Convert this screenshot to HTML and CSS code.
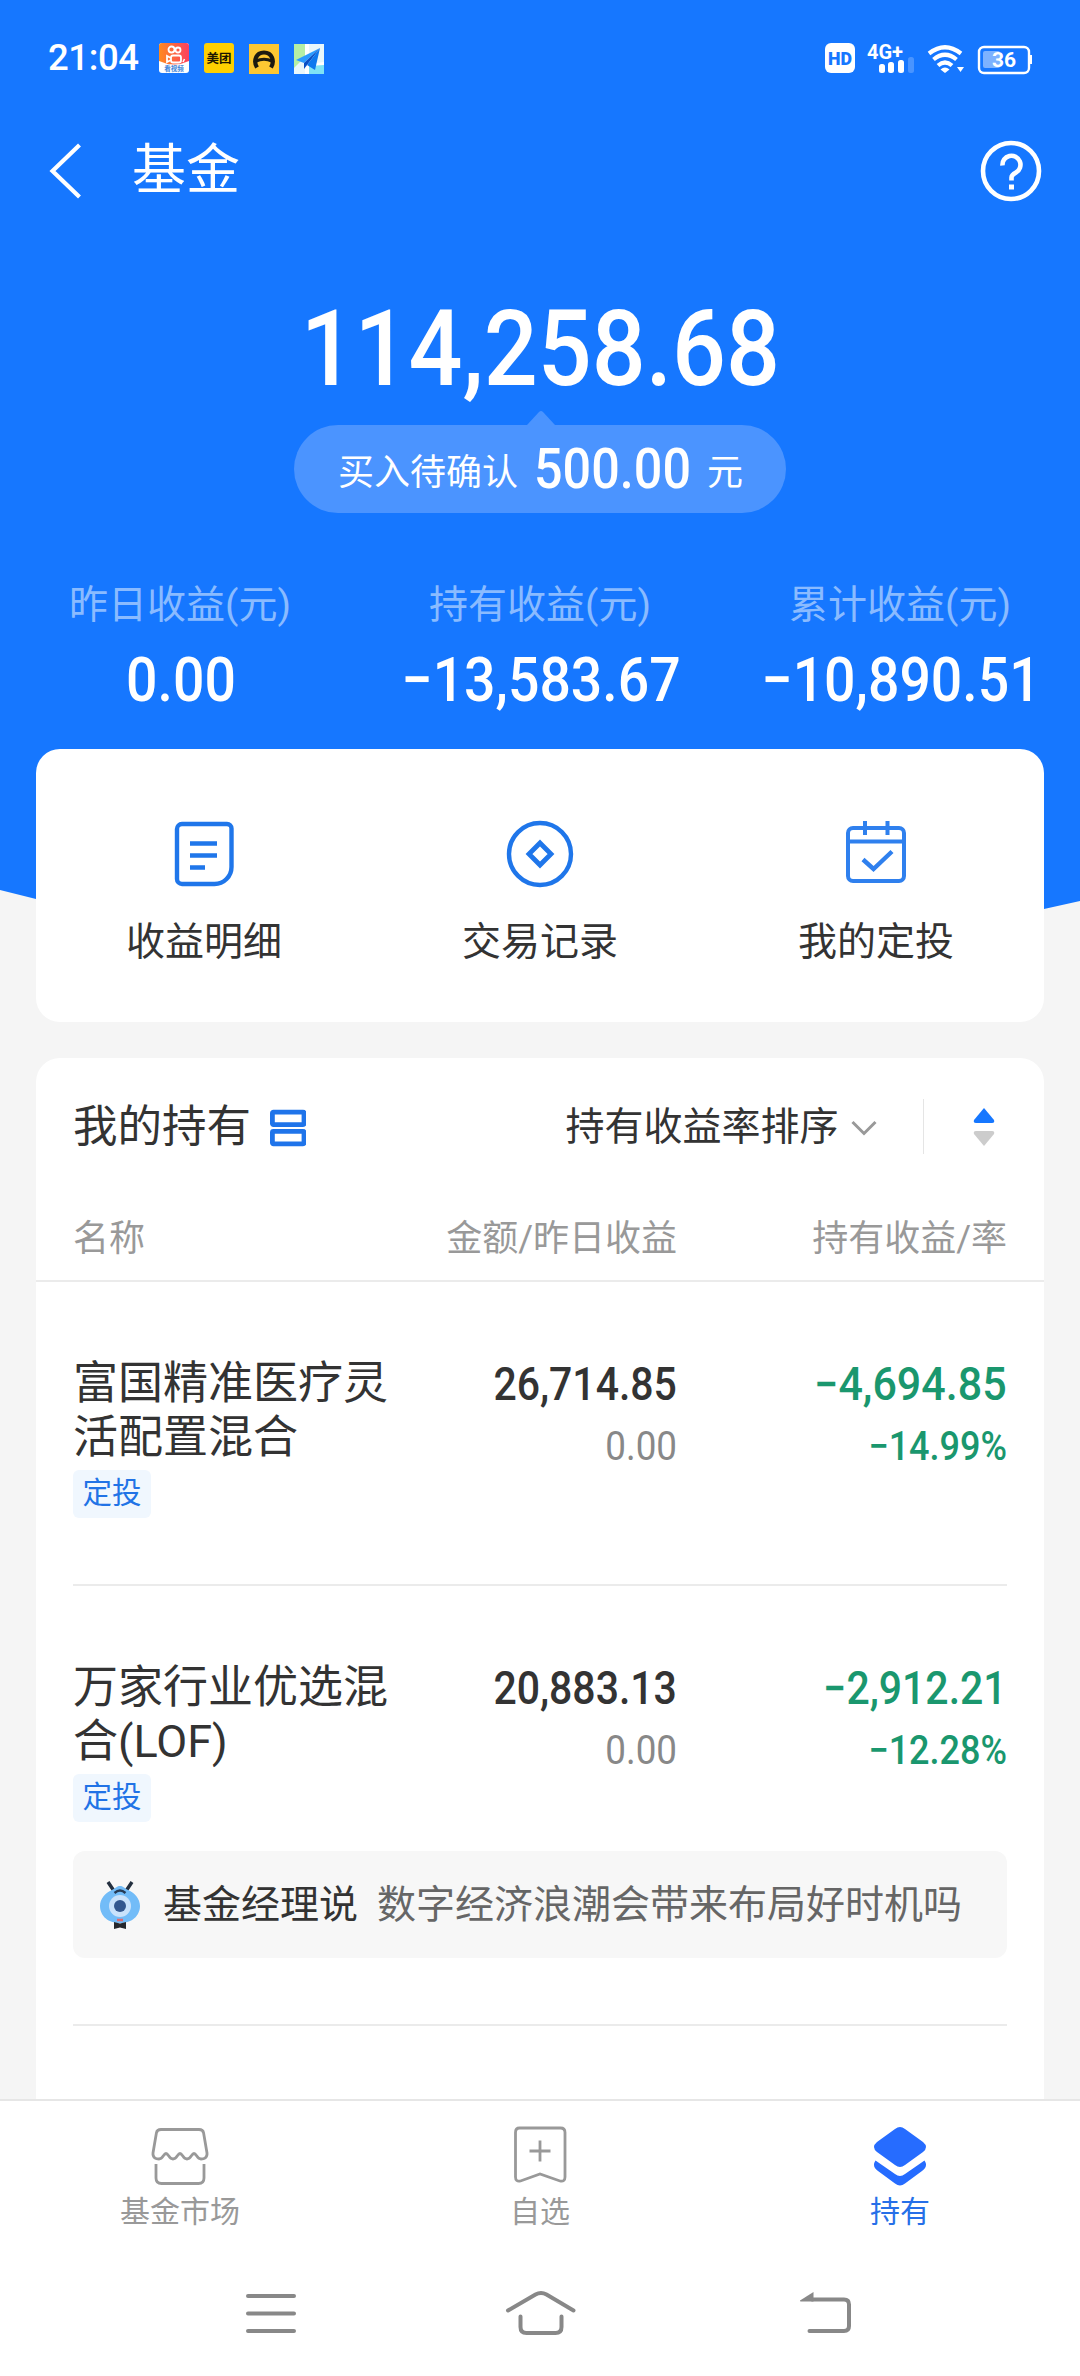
FILE: index.html
```html
<!DOCTYPE html>
<html lang="zh-CN">
<head>
<meta charset="utf-8">
<title>基金</title>
<link rel="stylesheet" href="styles.css">
</head>
<body>
<div class="screen">
  <header class="hero">
    <div class="status">
      <div class="status-left">
        <span class="clock">21:04</span>
        <svg class="app" viewBox="0 0 30 30"><defs><linearGradient id="ks" x1="0" y1="0" x2="1" y2="0"><stop offset="0" stop-color="#ff8a1f"/><stop offset="1" stop-color="#fb4060"/></linearGradient></defs><rect width="30" height="30" rx="3" fill="#fff"/><path d="M0 3a3 3 0 0 1 3-3h24a3 3 0 0 1 3 3v15q-15 7-30 0z" fill="url(#ks)"/><g fill="none" stroke="#fff" stroke-width="1.8"><circle cx="12.500" cy="6.500" r="3"/><circle cx="19" cy="7" r="2.500"/><rect x="12" y="12.500" width="10" height="7" rx="2"/><path d="M12 15l-4-2v6l4-2"/></g><path d="M24 19l1.500-3" stroke="#fff" stroke-width="1.500"/><text x="15" y="27.500" font-size="6.500" font-weight="700" text-anchor="middle" fill="#3d82d8">看视频</text></svg>
        <svg class="app" viewBox="0 0 30 30"><rect width="30" height="30" rx="3" fill="#ffd000"/><text x="15" y="19.500" font-size="12.500" font-weight="700" text-anchor="middle" fill="#1c1600">美团</text></svg>
        <svg class="app low" viewBox="0 0 30 30"><rect width="30" height="30" fill="#fdc732"/><path d="M8 23.500C4 17 7 8.500 15 8.500S26 17 22 23.500" fill="none" stroke="#1d1a10" stroke-width="4.200"/><path d="M7 17q8-3.500 16 0" fill="none" stroke="#1d1a10" stroke-width="3.200"/></svg>
        <svg class="app low" viewBox="0 0 30 30"><rect width="30" height="30" fill="#e9f7fb"/><path d="M0 0h11v13L0 24z" fill="#b5efa5"/><path d="M11 0h4v30h-4z" fill="#fff"/><path d="M15 21h15v9H15z" fill="#7fe3f5"/><path d="M15 20l15-2v3l-15 1z" fill="#fff"/><path d="M26 4L2 16l8 3z" fill="#2a9bff"/><path d="M26 4L10 19v6z" fill="#0a4fc4"/><path d="M26 4L13 21l8 5z" fill="#0d78ee"/></svg>
      </div>
      <div class="status-right">
        <svg width="210" height="34" viewBox="822 41 210 34"><rect x="825" y="43" width="30" height="30" rx="6" fill="#fff"/><text x="840" y="64.500" font-size="18" font-weight="900" text-anchor="middle" textLength="24" lengthAdjust="spacingAndGlyphs" fill="#1677ff">HD</text><text x="867" y="59" font-size="21" font-weight="700" textLength="36" lengthAdjust="spacingAndGlyphs" fill="#fff">4G+</text><g fill="#fff"><rect x="879" y="64" width="6" height="9" rx="2.500"/><rect x="888" y="62" width="6" height="11" rx="2.500"/><rect x="898" y="60" width="6" height="13" rx="2.500"/><rect x="908" y="57" width="6" height="16" rx="2.500" opacity=".22"/><path d="M957 67h7l-3.500 5z"/><path d="M940.500 69.500q4.500-4 9 0l-4.500 3.500z"/></g><g fill="none" stroke="#fff" stroke-width="4.200"><path d="M929 53.500q16-12.500 32 0"/><path d="M933.500 59.500q11.500-9.500 23 0"/><path d="M938 65.500q7-6 14 0"/></g><rect x="979" y="47" width="50" height="26" rx="5" fill="none" stroke="#fff" stroke-width="2.400"/><rect x="983" y="51" width="17" height="17" rx="2" fill="#7db2ff"/><path d="M1031 55v9" stroke="#fff" stroke-width="2"/><text x="1004" y="67" font-size="21" font-weight="700" text-anchor="middle" fill="#fff">36</text></svg>
      </div>
    </div>
    <nav class="titlebar">
      <svg class="back" width="34" height="56" viewBox="0 0 34 56"><path d="M31.500 2L4.500 28l27 26" fill="none" stroke="#fff" stroke-width="4.200"/></svg>
      <h1 class="title">基金</h1>
      <svg class="help" width="62" height="62" viewBox="0 0 62 62"><circle cx="31" cy="31" r="28" fill="none" stroke="#fff" stroke-width="4.600"/><path d="M22.500 25.500a9 9 0 1 1 13.500 7q-4.500 2.500-4.500 5v3" fill="none" stroke="#fff" stroke-width="4.600"/><rect x="29" y="44.500" width="5" height="5" fill="#fff"/></svg>
    </nav>
    <div class="total"><span class="num">114,258.68</span></div>
    <div class="pending">
      <svg class="notch" width="28" height="14" viewBox="0 0 28 14"><path d="M0 14L12 1q2-2 4 0l12 13z" fill="#4b94ff"/></svg>
      <span>买入待确认</span><span class="pending-num"><span class="num">500.00</span></span><span>元</span>
    </div>
    <div class="stats">
      <div class="stat"><div class="stat-label">昨日收益(元)</div><div class="stat-value"><span class="num">0.00</span></div></div>
      <div class="stat"><div class="stat-label">持有收益(元)</div><div class="stat-value"><span class="num">−13,583.67</span></div></div>
      <div class="stat"><div class="stat-label">累计收益(元)</div><div class="stat-value"><span class="num">−10,890.51</span></div></div>
    </div>
  </header>

  <section class="card shortcuts">
    <div class="shortcut">
      <svg width="72" height="72" viewBox="0 0 72 72"><path d="M14 6h45a4.500 4.500 0 0 1 4.500 4.500V49a17 17 0 0 1-17 17H14a5 5 0 0 1-5-5V11a5 5 0 0 1 5-5z" fill="none" stroke="#1f76ea" stroke-width="4.400"/><path d="M22 25.500h27M22 37.500h27M22 49.500h15" stroke="#1f76ea" stroke-width="4.600"/></svg>
      <span>收益明细</span>
    </div>
    <div class="shortcut">
      <svg width="72" height="72" viewBox="0 0 72 72"><circle cx="36" cy="36" r="31" fill="none" stroke="#1f76ea" stroke-width="4.400"/><path d="M36 25L47 36L36 47L25 36z" fill="none" stroke="#1f76ea" stroke-width="4.800"/></svg>
      <span>交易记录</span>
    </div>
    <div class="shortcut">
      <svg width="72" height="72" viewBox="0 0 72 72"><g fill="none" stroke="#2f80ee" stroke-width="4"><rect x="8" y="10" width="56" height="53" rx="5"/><path d="M8 23.500h56M25 3v14M47.500 3v14"/><path d="M23 41.500l10.500 9.500L52 33.500" stroke-width="4.400"/></g></svg>
      <span>我的定投</span>
    </div>
  </section>

  <main class="card holdings">
    <div class="toolbar">
      <h2 class="toolbar-title">我的持有</h2>
      <svg class="layout-icon" width="36" height="38" viewBox="0 0 36 38"><g fill="none" stroke="#1f74ea" stroke-width="4.800"><rect x="2.400" y="3.200" width="31.600" height="12.400" rx="1"/><rect x="2.400" y="22.400" width="31.600" height="12.400" rx="1"/></g></svg>
      <span class="sort">持有收益率排序</span>
      <svg class="chev" width="26" height="18" viewBox="0 0 26 18"><path d="M1.500 3L13 14.500L24.500 3" fill="none" stroke="#999" stroke-width="3"/></svg>
      <span class="divider"></span>
      <svg class="order" width="22" height="38" viewBox="0 0 22 38"><path d="M11 0l10 12q1 3-2 3H3q-3 0-2-3z" fill="#1677ff"/><path d="M11 38l10-12q1-3-2-3H3q-3 0-2 3z" fill="#ccc"/></svg>
    </div>
    <div class="row cols-head"><span>名称</span><span>金额/昨日收益</span><span>持有收益/率</span></div>

    <article class="fund">
      <div class="row">
        <div><h3 class="name">富国精准医疗灵<br>活配置混合</h3><span class="tag">定投</span></div>
        <div class="figures"><div class="big dark"><span class="num">26,714.85</span></div><div class="small grey"><span class="num">0.00</span></div></div>
        <div class="figures green"><div class="big"><span class="num wide">−4,694.85</span></div><div class="small"><span class="num">−14.99%</span></div></div>
      </div>
    </article>

    <article class="fund with-tip">
      <div class="row">
        <div><h3 class="name">万家行业优选混<br>合(LOF)</h3><span class="tag">定投</span></div>
        <div class="figures"><div class="big dark"><span class="num">20,883.13</span></div><div class="small grey"><span class="num">0.00</span></div></div>
        <div class="figures green"><div class="big"><span class="num">−2,912.21</span></div><div class="small"><span class="num">−12.28%</span></div></div>
      </div>
      <div class="tip">
        <svg width="42" height="48" viewBox="0 0 42 48"><path d="M9 1l6 9M33 1l-6 9" stroke="#243040" stroke-width="3.400"/><path d="M21 5c3 0 4 2 8 4 7 3 12 9 12 16s-5 17-20 17S1 32 1 25 6 12 13 9c4-2 5-4 8-4z" fill="#72bcf8"/><path d="M15.500 12q5.500-5 11 0" fill="none" stroke="#263b55" stroke-width="2.400"/><circle cx="21" cy="25" r="11" fill="#c9e2fb"/><circle cx="21" cy="25" r="6" fill="#34588f"/><path d="M18 39h6" stroke="#dc6c74" stroke-width="2.500"/><path d="M15 41l6 1.500 6-1.500v7l-6-1.500-6 1.500z" fill="#25272c"/></svg>
        <b>基金经理说</b><span>数字经济浪潮会带来布局好时机吗</span>
      </div>
    </article>
  </main>

  <nav class="tabs">
    <div class="tab">
      <svg width="64" height="64" viewBox="0 0 64 64"><g fill="none" stroke="#999" stroke-width="2.800"><path d="M13 6.500h38q4 0 4.600 3.500L59 30c.5 5-3 6-6 6-4 0-4.500-5.500-7-5.500S43 36 39 36s-4.500-5.500-7-5.500S29 36 25 36s-4.500-5.500-7-5.500S15 36 11 36c-3 0-6.500-1-6-6L8.400 10Q9 6.500 13 6.500z"/><path d="M8 41v14q0 5.500 5.500 5.500h37q5.500 0 5.500-5.500V41"/></g></svg>
      <span>基金市场</span>
    </div>
    <div class="tab">
      <svg width="64" height="64" viewBox="0 0 64 64"><g fill="none" stroke="#999" stroke-width="2.800"><path d="M11.500 5h41q4.500 0 4.500 4.500V54q0 5-5 4L32 51 12.500 58q-5 1-5-4V9.500Q7.500 5 11.500 5z"/><path d="M32 17.500v21M21.500 28h21"/></g></svg>
      <span>自选</span>
    </div>
    <div class="tab active">
      <svg width="64" height="64" viewBox="0 0 64 64"><g fill="#266cff"><path d="M27 6q5-4 10 0l18 13q6 5 0 10L37 42q-5 4-10 0L9 29q-6-5 0-10z"/><path d="M7.500 37.500L27 51q5 4 10 0l19.500-13.500q4 6-2.500 10.500L37 60.500q-5 4-10 0L10 48q-6.500-4.500-2.500-10.500z"/></g></svg>
      <span>持有</span>
    </div>
  </nav>
  <footer class="sysnav">
    <svg viewBox="0 0 80 60"><path d="M18 13h46M18 30.500h46M18 48h46" /></svg>
    <svg viewBox="0 0 80 60"><path d="M8 27.500L35.500 11.500Q41 8.500 46.500 11.500L73.500 27.500M20.500 33.500V44q0 6 6 6h29q6 0 6-6V33.500"/></svg>
    <svg viewBox="0 0 80 60"><path d="M24 16.500h32q5 0 5 5v21.500q0 5-5 5H21.500"/><path class="solid" d="M12 17.500L25.500 9v9.500H13q-1.500 0-1-1z"/></svg>
  </footer>
</div>
</body>
</html>
```
FILE: styles.css
```css
* { box-sizing: border-box; }
body {
  margin: 0;
  background: #f5f5f5;
  color: #333;
  font-family: Roboto, "Noto Sans CJK SC", sans-serif;
}
h1, h2, h3 { margin: 0; font-weight: 400; }
svg { display: block; flex: none; }
.screen {
  width: 1080px;
  height: 2376px;
  overflow: hidden;
  display: flex;
  flex-direction: column;
}
.num {
  display: inline-block;
  white-space: nowrap;
  font-weight: 500;
  transform: scaleX(.9);
}
.num.wide { transform: scaleX(.945); }

/* Blue header */
.hero {
  flex: none;
  height: 910px;
  color: #fff;
  background: #1677ff;
  clip-path: polygon(0 0, 100% 0, 100% 901px, 1044px 909px, 36px 899px, 0 890px);
}
.status {
  height: 116px;
  padding: 0 48px 0 48px;
  display: flex;
  justify-content: space-between;
  align-items: center;
}
.status-left { display: flex; align-items: center; gap: 15px; }
.clock { width: 96px; font-size: 36.5px; font-weight: 500; line-height: 36px; letter-spacing: -.4px; }
.app { width: 30px; height: 30px; }
.app.low { margin-top: 2px; }
.app text { font-family: "Noto Sans CJK SC", sans-serif; }
.titlebar {
  height: 110px;
  padding: 0 38px 0 48px;
  display: flex;
  align-items: center;
}
.title { margin-left: 50px; font-size: 54px; line-height: 60px; flex: 1; }
.total { height: 199px; padding-top: 63px; text-align: center; font-size: 105.500px; line-height: 120px; }
.pending {
  position: relative;
  width: 492px;
  height: 88px;
  margin: 0 auto;
  padding-left: 44px;
  border-radius: 44px;
  background: #4b94ff;
  display: flex;
  align-items: center;
  font-size: 36px;
}
.notch { position: absolute; left: 233px; top: -14px; }
.pending-num { width: 156px; margin: 0 17px 0 16px; font-size: 55px; line-height: 60px; }
.pending-num .num { transform: scaleX(.915); transform-origin: left; }
.stats { margin-top: 63px; display: grid; grid-template-columns: repeat(3, 1fr); text-align: center; }
.stat-label { font-size: 39px; line-height: 58px; color: #8abbff; }
.stat-value { margin-top: 10px; padding-left: 2px; font-size: 61.500px; line-height: 72px; }
.stat-value .num { margin: 0 -20px; }

.card { width: 1008px; margin: 0 36px; background: #fff; border-radius: 24px; flex: none; }

/* Shortcuts */
.shortcuts {
  position: relative;
  height: 273px;
  margin-top: -161px;
  padding-top: 69px;
  display: grid;
  grid-template-columns: repeat(3, 1fr);
}
.shortcut { display: flex; flex-direction: column; align-items: center; font-size: 39px; line-height: 58px; }
.shortcut svg { margin-bottom: 23px; }

/* Holdings */
.holdings { height: 1041px; margin-top: 36px; border-radius: 24px 24px 0 0; overflow: hidden; }
.toolbar { height: 138px; padding: 0 49px 0 37px; display: flex; align-items: center; }
.toolbar-title { font-size: 44.500px; line-height: 60px; }
.layout-icon { margin: 2px auto 0 19px; }
.sort { font-size: 39px; line-height: 58px; }
.chev { margin: 2px 0 0 12px; }
.divider { width: 1.500px; height: 55px; margin: -2px 49px 0 46px; background: #e5e5e5; }
.row { display: grid; grid-template-columns: 326px 278px 330px; padding: 0 37px; }
.cols-head {
  height: 86px;
  padding-top: 14px;
  border-bottom: 2px solid #ebebeb;
  font-size: 36px;
  line-height: 58px;
  color: #999;
}
.cols-head span + span, .figures { text-align: right; }
.fund { height: 304px; margin: 0 37px; padding-top: 75px; border-bottom: 2px solid #ebebeb; }
.fund .row { padding: 0; }
.fund.with-tip { height: 440px; }
.name { font-size: 45px; line-height: 54px; }
.tag {
  display: block;
  width: 78px;
  height: 48px;
  margin-top: 5px;
  border-radius: 6px;
  background: #f0f7fe;
  color: #2173e6;
  font-size: 29.500px;
  line-height: 46px;
  text-align: center;
}
.figures .num { transform-origin: right; }
.big { font-size: 45.500px; line-height: 56px; }
.small { margin-top: 6px; font-size: 40px; line-height: 56px; }
.grey { color: #888; }
.grey .num { font-weight: 400; transform: scaleX(.92); }
.green { color: #1a976e; }
.tip {
  height: 107px;
  margin-top: 29px;
  padding-left: 26px;
  border-radius: 12px;
  background: #f7f7f7;
  display: flex;
  align-items: center;
  font-size: 39px;
  line-height: 58px;
  color: #666;
}
.tip b { margin: 0 19px 0 22px; font-weight: 400; color: #333; }

/* Bottom tabs */
.tabs {
  flex: none;
  height: 141px;
  padding-top: 22px;
  background: #fff;
  border-top: 2px solid #e6e6e6;
  display: grid;
  grid-template-columns: repeat(3, 1fr);
}
.tab { display: flex; flex-direction: column; align-items: center; color: #999; font-size: 30px; line-height: 44px; }
.tab svg { margin-bottom: 3px; }
.tab.active { color: #266fe8; }
.sysnav {
  flex: 1;
  padding: 43px 212px 0 230px;
  background: #fff;
  display: grid;
  grid-template-columns: 270px 1fr 80px;
}
.sysnav svg { width: 80px; height: 60px; fill: none; stroke: #888; stroke-width: 4; stroke-linecap: round; }
.sysnav .solid { fill: #888; stroke: none; }
```
